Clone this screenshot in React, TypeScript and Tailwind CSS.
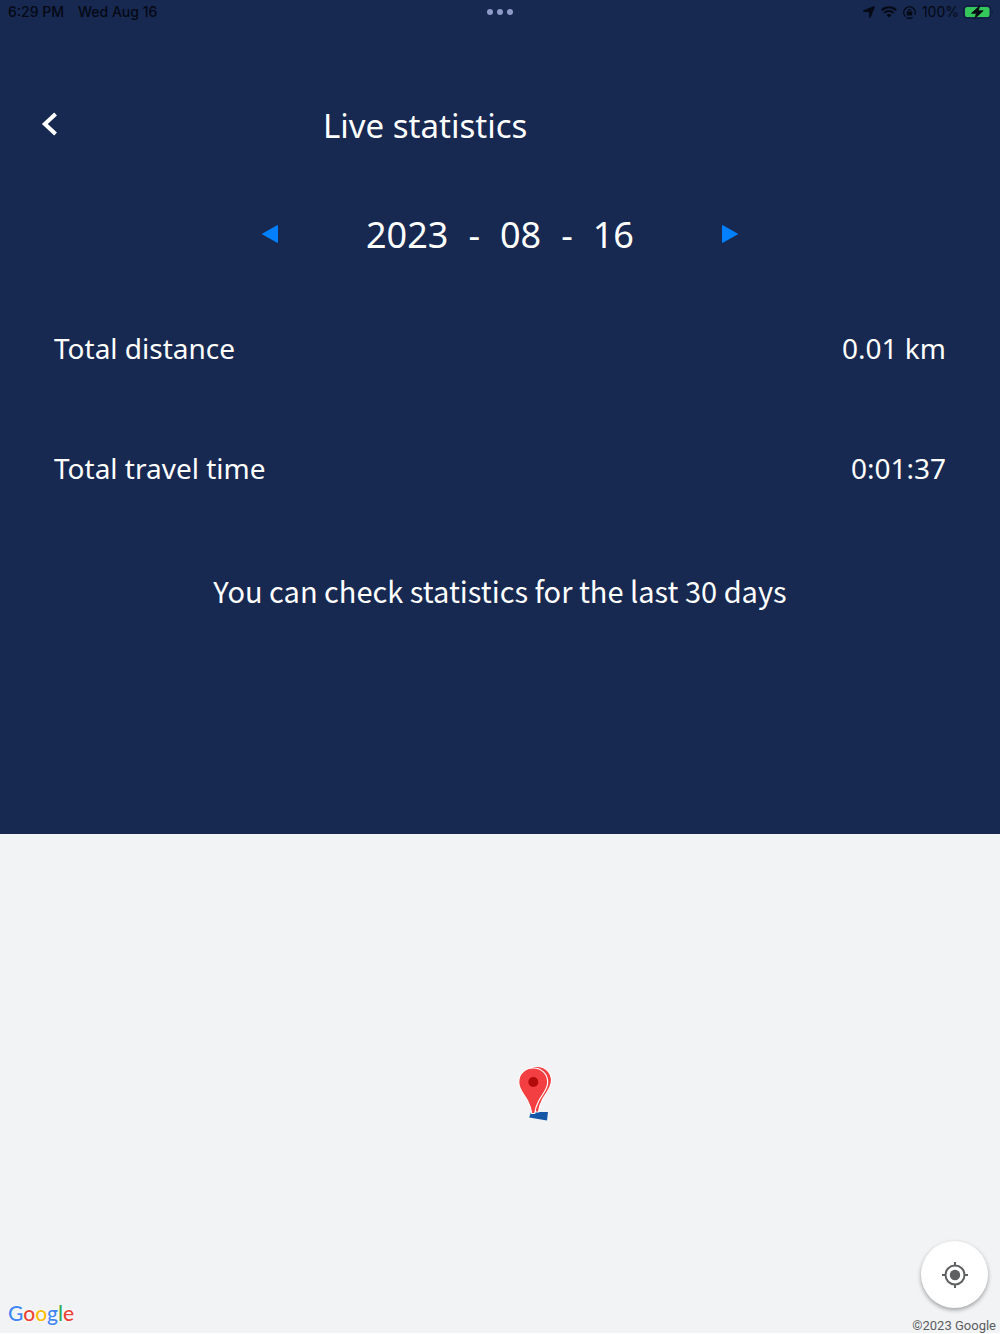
import React from "react";

function StatusBar() {
  return (
    <div className="grid h-6 grid-cols-3 items-center px-2 font-['Inter',sans-serif] text-sm font-medium leading-6 text-[#050914]">
      <div className="flex gap-3.5 whitespace-nowrap">
        <span>6:29 PM</span>
        <span>Wed Aug 16</span>
      </div>
      <div className="flex justify-center gap-1" aria-hidden="true">
        <span className="size-1.5 rounded-full bg-[#8e9bc8]" />
        <span className="size-1.5 rounded-full bg-[#8e9bc8]" />
        <span className="size-1.5 rounded-full bg-[#8e9bc8]" />
      </div>
      <div className="flex items-center justify-end gap-1.5">
        <svg className="h-3 w-3" viewBox="0 0 12 12" fill="currentColor" aria-hidden="true">
          <path d="M11.2.6a.7.7 0 0 1 .2.9L7.5 11.200c-.2.6-1.200.500-1.200-.1V6.100a.4.4 0 0 0-.4-.4H.9c-.6 0-.7-.9-.1-1.200L10.400.5c.3-.1.600-.1.8.1Z" stroke="currentColor" strokeWidth=".4" />
        </svg>
        <svg className="h-3 w-4" viewBox="0 0 16 12" aria-hidden="true">
          <path d="M.8 4.200a10.200 10.200 0 0 1 14.400 0M3.300 6.900a6.600 6.600 0 0 1 9.400 0" fill="none" stroke="currentColor" strokeWidth="2" />
          <path d="M8 11.500 5.500 9.100a3.600 3.600 0 0 1 5 0Z" fill="currentColor" />
        </svg>
        <svg className="h-[13px] w-[13px]" viewBox="0 0 12 12" aria-hidden="true">
          <path d="M2.200 9.800A5.300 5.300 0 1 1 10.900 8.100M3.400 10.700a5.300 5.300 0 0 0 5.600-.3" fill="none" stroke="currentColor" strokeWidth="1.200" />
          <path d="M4.700 5.600V4.500a1.300 1.300 0 0 1 2.600 0v1.100" fill="none" stroke="currentColor" strokeWidth="1" />
          <rect x="3.500" y="5.200" width="5" height="3.500" rx=".6" fill="currentColor" />
        </svg>
        <span className="font-normal">100%</span>
        <svg className="-ml-0.5 -mr-0.5 h-[14px] w-[31px]" viewBox="0 0 31 14" aria-hidden="true">
          <rect x=".7" y=".6" width="27" height="12.800" rx="4" fill="none" stroke="#111d3c" strokeWidth="1" />
          <rect x="2" y="2" width="24.500" height="10" rx="2.600" fill="#34c759" />
          <path d="M29 5v4c1.300-.5 1.300-3.500 0-4Z" fill="#111d3c" />
          <path d="M16.800.8 8.500 8.300h5L11.800 13.400l8.300-7.600h-5Z" fill="#050914" stroke="#050914" strokeWidth=".8" strokeLinejoin="round" />
        </svg>
      </div>
    </div>
  );
}

function Stat({ label, value }: { label: string; value: string }) {
  return (
    <div className="flex items-center justify-between text-[28px] leading-10">
      <dt>{label}</dt>
      <dd>{value}</dd>
    </div>
  );
}

const pinPath = "M17 3C8.500 3 2.500 9.200 2.500 17c0 7.500 5 11.500 9 19 2.200 4.300 3.500 8 4 12.500h3c.4-4.500 1.800-8.200 4-12.500C26.500 28.500 31.500 24.500 31.500 17 31.500 9.200 25.500 3 17 3Z";

function MapMarker() {
  return (
    <svg className="absolute left-[53.5%] top-[51.5%] h-[60px] w-10 -translate-x-1/2 -translate-y-1/2" viewBox="0 0 40 60" role="img" aria-label="Route position">
      <path d="M16 51 33 51 32 59.500 14.200 56.500Z" fill="#1557a6" />
      <path d={pinPath} fill="#f43f42" stroke="#fff" strokeWidth="1.200" transform="translate(5 2.500)" />
      <path d={pinPath} fill="#f43f42" stroke="#fff" strokeWidth="1.200" transform="translate(1.200 4)" />
      <circle cx="18.300" cy="21" r="5" fill="#b30b0b" />
    </svg>
  );
}

export default function App() {
  return (
    <main className="flex min-h-screen flex-col bg-[#f1f3f5]">
      <section className="bg-[#172851] pb-[220px] font-['Noto_Sans',sans-serif] text-white">
        <StatusBar />
        <header className="mt-20 flex h-11 items-center">
          <button type="button" aria-label="Back" className="flex h-11 w-[32.3%] items-center pb-1 pl-10">
            <svg className="h-6 w-5" viewBox="0 0 20 24" fill="none" stroke="currentColor" strokeWidth="4" aria-hidden="true">
              <path d="M15.600 2 4.800 12l10.800 10" />
            </svg>
          </button>
          <h1 className="text-[33px] font-normal leading-11">Live statistics</h1>
        </header>
        <div className="mt-[62px] flex h-12 items-center justify-center gap-[83px]">
          <button type="button" aria-label="Previous day" className="p-1">
            <svg className="h-5 w-[18px]" viewBox="0 0 18 20" aria-hidden="true">
              <path d="M1.500 10 16.500 1.500v17Z" fill="#0080ff" stroke="#0080ff" strokeLinejoin="round" />
            </svg>
          </button>
          <time dateTime="2023-08-16" className="flex gap-5 pt-0.5 text-4xl leading-12">
            <span>2023</span>
            <span>-</span>
            <span>08</span>
            <span>-</span>
            <span>16</span>
          </time>
          <button type="button" aria-label="Next day" className="p-1">
            <svg className="h-5 w-[18px]" viewBox="0 0 18 20" aria-hidden="true">
              <path d="M16.500 10 1.500 1.500v17Z" fill="#0080ff" stroke="#0080ff" strokeLinejoin="round" />
            </svg>
          </button>
        </div>
        <dl className="mt-[70px] flex flex-col gap-20 px-[54px]">
          <Stat label="Total distance" value="0.01 km" />
          <Stat label="Total travel time" value="0:01:37" />
        </dl>
        <p className="mt-[78px] text-center font-['Noto_Sans_CJK_KR',sans-serif] text-[29px] font-normal leading-12">
          You can check statistics for the last 30 days
        </p>
      </section>
      <section aria-label="Map" className="relative flex flex-1 flex-col justify-end border-b border-white">
        <MapMarker />
        <div className="flex items-end justify-between">
          <div className="pb-1 pl-2 font-['Lato',sans-serif] text-[21px] font-medium leading-8 [text-shadow:0_0_2px_white,0_0_2px_white]">
            <span className="text-[#4285f4]">G</span>
            <span className="text-[#ea4335]">o</span>
            <span className="text-[#fbbc05]">o</span>
            <span className="text-[#4285f4]">g</span>
            <span className="text-[#34a853]">l</span>
            <span className="text-[#ea4335]">e</span>
          </div>
          <div className="flex flex-col items-end">
            <button type="button" aria-label="My location" className="mb-[11px] mr-3 flex size-[67px] items-center justify-center rounded-full bg-white shadow-[0_2px_4px_rgba(0,0,0,0.35)]">
              <svg className="size-7" viewBox="0 0 28 28" fill="none" stroke="#5f6062" strokeWidth="2" aria-hidden="true">
                <circle cx="14" cy="14" r="9.500" />
                <path d="M14 1v4M14 23v4M1 14h4M23 14h4" />
                <circle cx="14" cy="14" r="5.200" fill="#5f6062" stroke="none" />
              </svg>
            </button>
            <small className="pr-1 font-['Roboto',sans-serif] text-[13px] leading-[14px] text-[#5c5d5f]">©2023 Google</small>
          </div>
        </div>
      </section>
    </main>
  );
}
